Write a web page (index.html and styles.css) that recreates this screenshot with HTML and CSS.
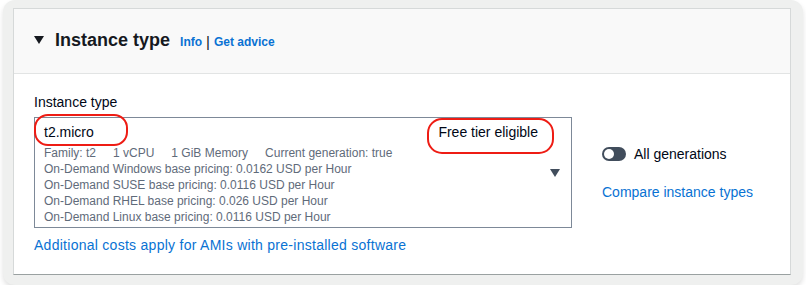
FILE: index.html
```html
<!DOCTYPE html>
<html>
<head>
<meta charset="utf-8">
<link rel="stylesheet" href="styles.css">
</head>
<body>
<div class="frame">
  <div class="panel">
    <div class="header">
      <span class="caret"></span>
      <h2 class="title">Instance type</h2>
      <a class="hlink">Info</a>
      <span class="sep">|</span>
      <a class="hlink">Get advice</a>
    </div>
    <div class="content">
      <div class="left">
        <div class="label">Instance type</div>
        <div class="select">
          <div class="select-body">
            <div class="row-top">
              <span class="name mark">t2.micro</span>
              <span class="free mark mark-free">Free tier eligible</span>
            </div>
            <div class="detail">
              <span>Family: t2</span><span>1 vCPU</span><span>1 GiB Memory</span><span>Current generation: true</span>
            </div>
            <div class="detail">On-Demand Windows base pricing: 0.0162 USD per Hour</div>
            <div class="detail">On-Demand SUSE base pricing: 0.0116 USD per Hour</div>
            <div class="detail">On-Demand RHEL base pricing: 0.026 USD per Hour</div>
            <div class="detail">On-Demand Linux base pricing: 0.0116 USD per Hour</div>
          </div>
          <div class="arrow-col"><span class="arrow"></span></div>
        </div>
        <a class="link costs">Additional costs apply for AMIs with pre-installed software</a>
      </div>
      <div class="right">
        <div class="toggle-row">
          <span class="toggle"><span class="knob"></span></span>
          <span class="toggle-label">All generations</span>
        </div>
        <a class="link compare">Compare instance types</a>
      </div>
    </div>
  </div>
</div>
</body>
</html>
```
FILE: styles.css
```css
html, body {
  margin: 0;
  padding: 0;
  background: #ffffff;
}
body {
  font-family: "Liberation Sans", Arial, sans-serif;
  color: #000716;
  padding: 0 3px;
}
.frame {
  width: 800px;
  height: 285px;
  box-sizing: border-box;
  background: #eff0ef;
  border-radius: 12px;
  box-shadow: 0 3px 5px rgba(0,0,0,0.12);
  padding: 8px 12px 10px 10px;
}
.panel {
  width: 778px;
  height: 267px;
  box-sizing: border-box;
  background: #ffffff;
  border: 1px solid #d6d9d9;
  border-bottom-color: #9aa1a1;
}
.header {
  height: 65px;
  box-sizing: border-box;
  background: #f9f9f9;
  border-bottom: 1px solid #e2e4e4;
  display: flex;
  align-items: center;
  padding-left: 20px;
}
.caret {
  width: 0;
  height: 0;
  border-left: 5px solid transparent;
  border-right: 5px solid transparent;
  border-top: 8px solid #16191f;
  margin-right: 11px;
  margin-top: -2px;
}
.title {
  margin: 0;
  font-size: 18px;
  font-weight: bold;
  color: #16191f;
  margin-right: 10px;
  margin-top: -1px;
}
.hlink {
  font-size: 12px;
  font-weight: bold;
  color: #0972d3;
  margin-top: 2px;
}
.sep {
  font-size: 15px;
  margin: 1px 4px 0 4px;
  color: #16191f;
}
.content {
  display: flex;
  padding: 18px 20px 0 20px;
}
.left {
  width: 538px;
}
.label {
  font-size: 14px;
  line-height: 20px;
  margin-bottom: 5px;
}
.select {
  display: flex;
  border: 1px solid #7d8998;
  height: 111px;
  box-sizing: border-box;
}
.select-body {
  flex: 1;
  padding: 3px 0 0 9px;
}
.row-top {
  display: flex;
  justify-content: space-between;
  font-size: 14px;
  line-height: 22px;
  padding-right: 2px;
  margin-bottom: 2px;
}
.mark {
  position: relative;
}
.mark::before {
  content: "";
  position: absolute;
  border: 2.5px solid #ee1c14;
  border-radius: 14px;
  left: -10px;
  right: -34px;
  top: -7px;
  bottom: -3px;
}
.mark-free::before {
  left: -11px;
  right: -16px;
  top: -3px;
  bottom: -11px;
  border-radius: 15px;
}
.detail {
  font-size: 12px;
  line-height: 16px;
  color: #5f6b7a;
  display: flex;
  gap: 17px;
}
.arrow-col {
  width: 31px;
  display: flex;
  align-items: center;
  justify-content: flex-start;
  padding-left: 10px;
  box-sizing: border-box;
}
.arrow {
  width: 0;
  height: 0;
  border-left: 5px solid transparent;
  border-right: 5px solid transparent;
  border-top: 8px solid #414d5c;
}
.link {
  display: block;
  font-size: 14px;
  color: #0972d3;
  line-height: 20px;
}
.costs {
  margin-top: 7px;
  letter-spacing: 0.27px;
}
.right {
  padding-left: 30px;
  padding-top: 52px;
}
.toggle-row {
  display: flex;
  align-items: center;
  height: 20px;
}
.toggle {
  width: 24px;
  height: 14px;
  border-radius: 7px;
  background: #414d5c;
  display: flex;
  align-items: center;
  padding-left: 2px;
  box-sizing: border-box;
  margin-right: 8px;
}
.knob {
  width: 10px;
  height: 10px;
  border-radius: 50%;
  background: #ffffff;
}
.toggle-label {
  font-size: 14px;
}
.compare {
  margin-top: 18px;
}
```
